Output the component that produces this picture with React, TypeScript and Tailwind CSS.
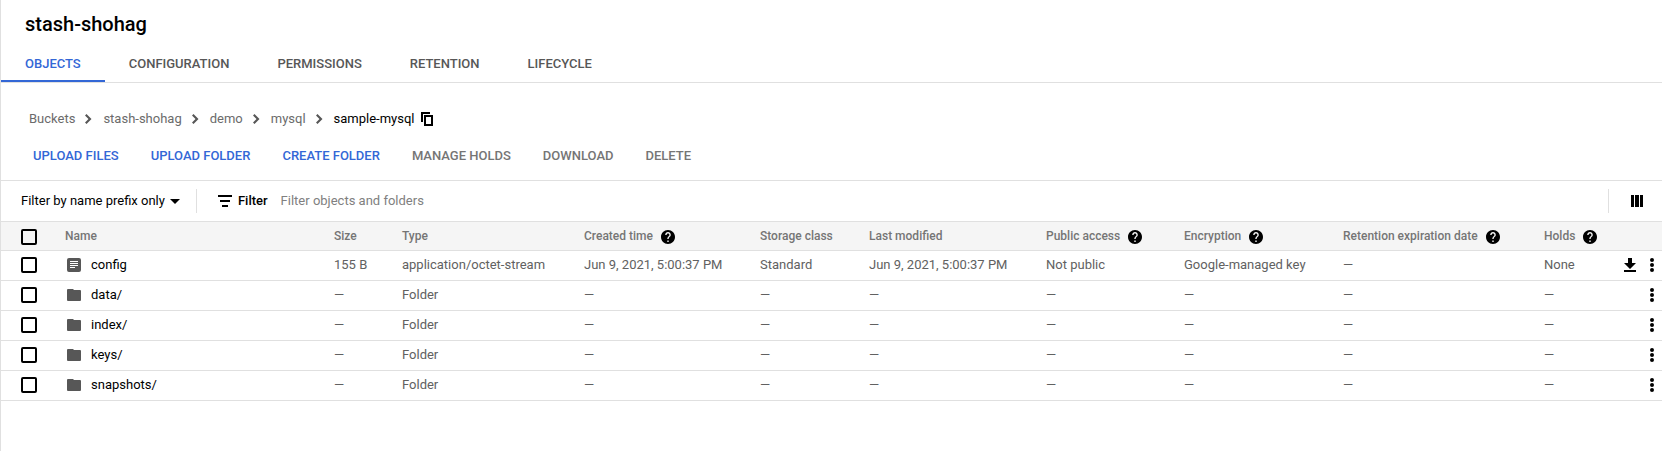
import React from "react";

const LINE = "border-[#e0e0e0]";

function Icon({ path, box = "0 0 24 24", className }: { path: string; box?: string; className: string }) {
  return (
    <svg viewBox={box} className={`shrink-0 fill-current ${className}`} aria-hidden="true">
      <path d={path} />
    </svg>
  );
}

const HELP =
  "M12 2C6.48 2 2 6.48 2 12s4.48 10 10 10 10-4.48 10-10S17.52 2 12 2zm1 17h-2v-2h2v2zm2.07-7.75-.9.92C13.45 12.9 13 13.5 13 15h-2v-.5c0-1.1.45-2.1 1.17-2.83l1.24-1.26c.37-.36.59-.86.59-1.41 0-1.1-.9-2-2-2s-2 .9-2 2H8c0-2.21 1.79-4 4-4s4 1.79 4 4c0 .88-.36 1.68-.93 2.25z";
const CHEVRON = "M0 1.5 1.5 0l5 5-5 5L0 8.5 3.5 5z";

const tabs = ["OBJECTS", "CONFIGURATION", "PERMISSIONS", "RETENTION", "LIFECYCLE"];
const crumbs = ["Buckets", "stash-shohag", "demo", "mysql"];
const actions = [
  { label: "UPLOAD FILES", enabled: true },
  { label: "UPLOAD FOLDER", enabled: true },
  { label: "CREATE FOLDER", enabled: true },
  { label: "MANAGE HOLDS", enabled: false },
  { label: "DOWNLOAD", enabled: false },
  { label: "DELETE", enabled: false },
];

const columns = [
  { label: "Name", width: "" },
  { label: "Size", width: "w-[68px]" },
  { label: "Type", width: "w-[182px]" },
  { label: "Created time", width: "w-[176px]", help: true },
  { label: "Storage class", width: "w-[109px]" },
  { label: "Last modified", width: "w-[177px]" },
  { label: "Public access", width: "w-[138px]", help: true },
  { label: "Encryption", width: "w-[159px]", help: true },
  { label: "Retention expiration date", width: "w-[201px]", help: true },
  { label: "Holds", width: "w-[66px]", help: true },
];

const dashes = ["—", "—", "—", "—", "—", "—"];
const rows = [
  {
    name: "config",
    file: true,
    cells: [
      "155 B",
      "application/octet-stream",
      "Jun 9, 2021, 5:00:37 PM",
      "Standard",
      "Jun 9, 2021, 5:00:37 PM",
      "Not public",
      "Google-managed key",
      "—",
      "None",
    ],
  },
  ...["data/", "index/", "keys/", "snapshots/"].map((name) => ({
    name,
    file: false,
    cells: ["—", "Folder", ...dashes, "—"],
  })),
];

function Checkbox({ label }: { label: string }) {
  return (
    <input
      type="checkbox"
      aria-label={label}
      className="ml-5 block size-4 appearance-none rounded-xs border-2 border-black checked:bg-black"
    />
  );
}

export default function App() {
  return (
    <main className={`min-h-screen border-l bg-white font-[Roboto,sans-serif] text-[13px] leading-5 text-[#575757] ${LINE}`}>
      <h1 className="px-6 pt-2.5 text-xl leading-7 font-medium text-black">stash-shohag</h1>

      <nav aria-label="Bucket sections" className={`mt-2 flex border-b ${LINE}`}>
        {tabs.map((tab, i) => (
          <a
            key={tab}
            href="#"
            aria-current={i === 0 ? "page" : undefined}
            className={`border-b-2 px-6 pt-2 pb-1.5 font-medium ${
              i === 0 ? "border-[#3367d6] text-[#3367d6]" : "border-transparent"
            }`}
          >
            {tab}
          </a>
        ))}
      </nav>

      <nav aria-label="Breadcrumb" className="mt-[26px] flex items-center pl-7">
        {crumbs.map((crumb) => (
          <React.Fragment key={crumb}>
            <a href="#" className="text-[#6b6b6b]">{crumb}</a>
            <Icon box="0 0 7 10" path={CHEVRON} className="mr-[11px] ml-2.5 h-2.5 w-[7px]" />
          </React.Fragment>
        ))}
        <span className="text-black">sample-mysql</span>
        <button type="button" aria-label="Copy path" className="ml-1.5 text-black">
          <Icon box="0 0 12 14" path="M0 0h9v2H2v8H0zM3 3h9v11H3zM5 5v7h5V5z" className="h-3.5 w-3" />
        </button>
      </nav>

      <div className="mt-[17px] flex gap-8 pl-8">
        {actions.map(({ label, enabled }) => (
          <button
            key={label}
            type="button"
            disabled={!enabled}
            className={`font-medium ${enabled ? "text-[#3367d6]" : "text-[#757575]"}`}
          >
            {label}
          </button>
        ))}
      </div>

      <div className={`mt-3.5 flex h-[42px] items-center border-y ${LINE}`}>
        <button type="button" className="ml-5 flex items-center gap-[5px] text-black">
          Filter by name prefix only
          <Icon box="0 0 10 5" path="M0 0h10L5 5z" className="h-[5px] w-2.5" />
        </button>
        <span className={`ml-4 h-6 border-l ${LINE}`} />
        <label className="ml-[21px] flex grow items-center font-medium text-black">
          <Icon box="0 0 14 12" path="M0 0h14v2H0zM2 5h10v2H2zM4 10h6v2H4z" className="mr-1.5 h-3 w-3.5" />
          Filter
          <input
            type="text"
            placeholder="Filter objects and folders"
            className="ml-[13px] grow font-normal outline-none placeholder:text-[#808080]"
          />
        </label>
        <span className={`h-6 border-l ${LINE}`} />
        <button type="button" aria-label="Column display options" className="mr-[19px] ml-[22px] text-black">
          <Icon box="0 0 12 12" path="M0 0h3v12H0zM4 0h4v12H4zM9 0h3v12H9z" className="size-3" />
        </button>
      </div>

      <table className="w-full table-fixed text-left whitespace-nowrap">
        <thead>
          <tr className={`h-7 border-b bg-[#f5f5f5] text-xs text-[#757575] ${LINE}`}>
            <th className="w-16 pt-0.5">
              <Checkbox label="Select all objects" />
            </th>
            {columns.map(({ label, width, help }) => (
              <th key={label} className={`font-medium ${width}`}>
                <span className="flex items-end gap-2">
                  <span className="leading-4">{label}</span>
                  {help && <Icon box="2 2 20 20" path={HELP} className="size-3.5 text-black" />}
                </span>
              </th>
            ))}
            <th className="w-[52px]" aria-label="Actions" />
          </tr>
        </thead>
        <tbody>
          {rows.map(({ name, file, cells }) => (
            <tr key={name} className={`h-[30px] border-b text-[#616161] ${LINE}`}>
              <td>
                <Checkbox label={`Select ${name}`} />
              </td>
              <td>
                <span className="flex items-center gap-2.5 pl-0.5">
                  {file ? (
                    <Icon
                      box="0 0 14 14"
                      path="M2 0h10a2 2 0 0 1 2 2v10a2 2 0 0 1-2 2H2a2 2 0 0 1-2-2V2a2 2 0 0 1 2-2zM3 3v1h8V3zM3 5v1h8V5zM3 7v1h8V7zM3 9v1h5V9z"
                      className="size-3.5 text-[#575757]"
                    />
                  ) : (
                    <Icon
                      box="0 0 14 12"
                      path="M1 0h5l1 1h6a1 1 0 0 1 1 1v9a1 1 0 0 1-1 1H1a1 1 0 0 1-1-1V1a1 1 0 0 1 1-1z"
                      className="h-3 w-3.5 text-[#575757]"
                    />
                  )}
                  <a href="#" className="text-black">{name}</a>
                </span>
              </td>
              {cells.map((cell, i) => (
                <td key={i}>{cell}</td>
              ))}
              <td>
                <span className="flex items-center justify-end gap-3.5 pr-2 text-black">
                  {file && (
                    <button type="button" aria-label={`Download ${name}`}>
                      <Icon box="0 0 12 14" path="M4 0h4v5h4l-6 6-6-6h4zM0 12h12v2H0z" className="h-3.5 w-3" />
                    </button>
                  )}
                  <button type="button" aria-label={`More actions for ${name}`}>
                    <Icon
                      box="0 0 4 14"
                      path="M2 0a2 2 0 1 1 0 4 2 2 0 0 1 0-4zM2 5a2 2 0 1 1 0 4 2 2 0 0 1 0-4zM2 10a2 2 0 1 1 0 4 2 2 0 0 1 0-4z"
                      className="h-3.5 w-1"
                    />
                  </button>
                </span>
              </td>
            </tr>
          ))}
        </tbody>
      </table>
    </main>
  );
}
